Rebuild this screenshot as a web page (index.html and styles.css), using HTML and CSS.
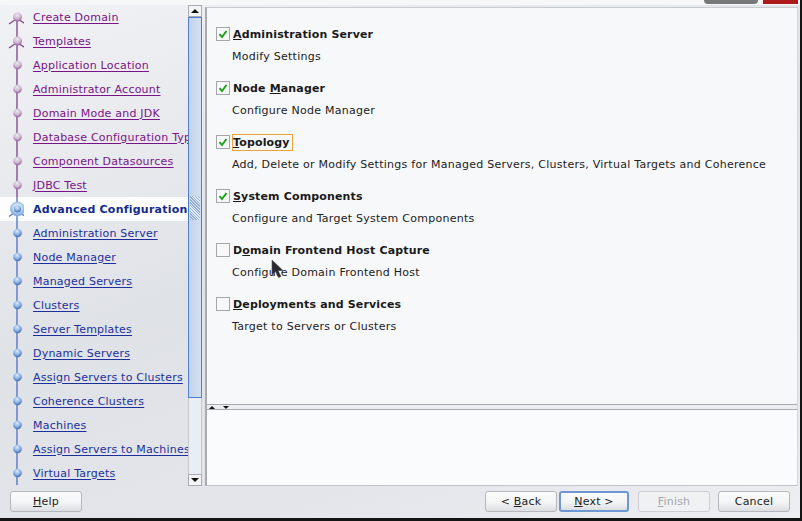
FILE: index.html
```html
<!DOCTYPE html>
<html lang="en">
<head>
<meta charset="utf-8">
<title>Configuration Wizard</title>
<link rel="stylesheet" href="styles.css">
</head>
<body>
<svg width="0" height="0" class="defs" aria-hidden="true">
  <defs>
    <radialGradient id="ballV" cx="45%" cy="30%" r="75%"><stop offset="0" stop-color="#efe6f0"/><stop offset=".55" stop-color="#cdb4d0"/><stop offset="1" stop-color="#85528c"/></radialGradient>
    <radialGradient id="ballB" cx="45%" cy="30%" r="75%"><stop offset="0" stop-color="#dfe9f8"/><stop offset=".5" stop-color="#8fb2e4"/><stop offset="1" stop-color="#2f62b8"/></radialGradient>
    <radialGradient id="ballC" cx="50%" cy="40%" r="60%"><stop offset="0" stop-color="#f2f7fd"/><stop offset=".6" stop-color="#b9d3ef"/><stop offset="1" stop-color="#6f9fd6"/></radialGradient>
    <symbol id="s-first" viewBox="0 0 24 24"><path d="M17 12V24" stroke="#7d3f88" stroke-width="1.300" fill="none"/><path d="M9 19 17 13.500l8.500 5.500" stroke="#7d3f88" stroke-width="1.100" fill="none"/><circle cx="17.500" cy="12" r="4.500" fill="url(#ballV)"/></symbol>
    <symbol id="s-tpl" viewBox="0 0 24 24"><path d="M17 0V24" stroke="#7d3f88" stroke-width="1.300" fill="none"/><path d="M9 19 17 13.500l8.500 5.500" stroke="#7d3f88" stroke-width="1.100" fill="none"/><circle cx="17.500" cy="12" r="4.500" fill="url(#ballV)"/></symbol>
    <symbol id="s-done" viewBox="0 0 24 24"><path d="M17 0V24" stroke="#7d3f88" stroke-width="1.300" fill="none"/><circle cx="17.500" cy="12" r="4.300" fill="url(#ballV)"/></symbol>
    <symbol id="s-cur" viewBox="0 0 24 24"><path d="M17 0V24" stroke="#4a72c4" stroke-width="1.300" fill="none"/><path d="M9 19.500 17 14l8.500 5.500" stroke="#4a72c4" stroke-width="1.100" fill="none"/><circle cx="17.500" cy="12" r="7" fill="url(#ballC)" stroke="#8fb4de" stroke-width=".8"/><circle cx="17.500" cy="12" r="3.500" fill="url(#ballB)"/></symbol>
    <symbol id="s-next" viewBox="0 0 24 24"><path d="M17 0V24" stroke="#4a72c4" stroke-width="1.300" fill="none"/><circle cx="17.500" cy="12" r="4.300" fill="url(#ballB)"/></symbol>
  </defs>
</svg>
<div class="window">
  <div class="topbar">
    <div class="brand-gray"></div>
    <div class="brand-red"></div>
  </div>
  <div class="main">
    <nav class="nav">
      <ul class="steps">
        <li class="step visited"><svg class="node"><use href="#s-first"/></svg><a>Create Domain</a></li>
        <li class="step visited"><svg class="node"><use href="#s-tpl"/></svg><a>Templates</a></li>
        <li class="step visited"><svg class="node"><use href="#s-done"/></svg><a>Application Location</a></li>
        <li class="step visited"><svg class="node"><use href="#s-done"/></svg><a>Administrator Account</a></li>
        <li class="step visited"><svg class="node"><use href="#s-done"/></svg><a>Domain Mode and JDK</a></li>
        <li class="step visited"><svg class="node"><use href="#s-done"/></svg><a>Database Configuration Type</a></li>
        <li class="step visited"><svg class="node"><use href="#s-done"/></svg><a>Component Datasources</a></li>
        <li class="step visited"><svg class="node"><use href="#s-done"/></svg><a>JDBC Test</a></li>
        <li class="step current"><svg class="node"><use href="#s-cur"/></svg><a>Advanced Configuration</a></li>
        <li class="step"><svg class="node"><use href="#s-next"/></svg><a>Administration Server</a></li>
        <li class="step"><svg class="node"><use href="#s-next"/></svg><a>Node Manager</a></li>
        <li class="step"><svg class="node"><use href="#s-next"/></svg><a>Managed Servers</a></li>
        <li class="step"><svg class="node"><use href="#s-next"/></svg><a>Clusters</a></li>
        <li class="step"><svg class="node"><use href="#s-next"/></svg><a>Server Templates</a></li>
        <li class="step"><svg class="node"><use href="#s-next"/></svg><a>Dynamic Servers</a></li>
        <li class="step"><svg class="node"><use href="#s-next"/></svg><a>Assign Servers to Clusters</a></li>
        <li class="step"><svg class="node"><use href="#s-next"/></svg><a>Coherence Clusters</a></li>
        <li class="step"><svg class="node"><use href="#s-next"/></svg><a>Machines</a></li>
        <li class="step"><svg class="node"><use href="#s-next"/></svg><a>Assign Servers to Machines</a></li>
        <li class="step"><svg class="node"><use href="#s-next"/></svg><a>Virtual Targets</a></li>
      </ul>
      <div class="scrollbar">
        <div class="sb-btn"><span class="tri up"></span></div>
        <div class="sb-thumb"><div class="sb-grip"></div></div>
        <div class="sb-rest"></div>
        <div class="sb-btn"><span class="tri down"></span></div>
      </div>
    </nav>
    <section class="pane">
      <div class="options">
        <div class="option">
          <div class="opt-head"><span class="check on"><svg viewBox="0 0 12 12"><path d="M2.500 6.200 5 9l4.500-6" fill="none" stroke="#1fa01f" stroke-width="2"/></svg></span><label class="opt-title"><u>A</u>dministration Server</label></div>
          <p class="opt-desc">Modify Settings</p>
        </div>
        <div class="option">
          <div class="opt-head"><span class="check on"><svg viewBox="0 0 12 12"><path d="M2.500 6.200 5 9l4.500-6" fill="none" stroke="#1fa01f" stroke-width="2"/></svg></span><label class="opt-title">Node <u>M</u>anager</label></div>
          <p class="opt-desc">Configure Node Manager</p>
        </div>
        <div class="option">
          <div class="opt-head"><span class="check on"><svg viewBox="0 0 12 12"><path d="M2.500 6.200 5 9l4.500-6" fill="none" stroke="#1fa01f" stroke-width="2"/></svg></span><label class="opt-title focused"><u>T</u>opology</label></div>
          <p class="opt-desc">Add, Delete or Modify Settings for Managed Servers, Clusters, Virtual Targets and Coherence</p>
        </div>
        <div class="option">
          <div class="opt-head"><span class="check on"><svg viewBox="0 0 12 12"><path d="M2.500 6.200 5 9l4.500-6" fill="none" stroke="#1fa01f" stroke-width="2"/></svg></span><label class="opt-title"><u>S</u>ystem Components</label></div>
          <p class="opt-desc">Configure and Target System Components</p>
        </div>
        <div class="option">
          <div class="opt-head"><span class="check"></span><label class="opt-title">D<u>o</u>main Frontend Host Capture</label></div>
          <p class="opt-desc">Configure Domain Frontend Host</p>
        </div>
        <div class="option">
          <div class="opt-head"><span class="check"></span><label class="opt-title"><u>D</u>eployments and Services</label></div>
          <p class="opt-desc">Target to Servers or Clusters</p>
        </div>
      </div>
      <div class="splitter"><span class="tri up small"></span><span class="tri down small"></span></div>
      <div class="detail"></div>
    </section>
  </div>
  <footer class="footer">
    <button class="btn help"><u>H</u>elp</button>
    <div class="spacer"></div>
    <button class="btn back">&lt; <u>B</u>ack</button>
    <button class="btn default"><u>N</u>ext &gt;</button>
    <button class="btn disabled"><u>F</u>inish</button>
    <button class="btn">Cancel</button>
  </footer>
</div>
<svg class="cursor" width="13" height="20" viewBox="0 0 13 20" aria-hidden="true"><path d="M1 1v15l3.500-3.500 3 6 2.500-1-3-6h5z" fill="#2a2a2e" stroke="#55565a" stroke-width=".6"/></svg>
</body>
</html>
```
FILE: styles.css
```css
* { box-sizing: border-box; }
html, body { margin: 0; padding: 0; }
body {
  position: relative;
  width: 802px;
  height: 521px;
  overflow: hidden;
  background: #141414;
  font-family: "DejaVu Sans", sans-serif;
  font-size: 11px;
  color: #1c1c1c;
}
.defs { position: absolute; }
.window {
  width: 800px;
  height: 518px;
  display: flex;
  flex-direction: column;
  background: linear-gradient(160deg, #f1f2f5 0%, #dfe2e7 45%, #e3e5ea 75%, #eceef2 100%);
}
.topbar {
  height: 5px;
  flex: none;
  display: flex;
  justify-content: flex-end;
  background: #f7f7f8;
  padding-right: 2px;
}
.brand-gray { width: 54px; height: 4px; margin-right: 5px; background: #77787a; border-radius: 0 0 6px 6px; }
.brand-red { width: 35px; height: 4px; background: #ad1a1c; }
.main {
  flex: 1;
  min-height: 0;
  display: flex;
  padding-right: 2px;
}
.nav { width: 205px; flex: none; display: flex; min-width: 0; padding-right: 3px; }
.steps {
  list-style: none;
  margin: 0;
  padding: 0;
  width: 188px;
  flex: none;
  overflow: hidden;
}
.step { height: 24px; display: flex; align-items: center; white-space: nowrap; }
.node { width: 24px; height: 24px; flex: none; margin-right: 9px; }
.step a {
  color: #1c2f9c;
  text-decoration: underline;
  text-underline-offset: 2px;
  letter-spacing: .22px;
}
.step.visited a { color: #7a1387; }
.step.current { background: #fdfdfe; }
.step.current a { color: #142a8c; font-weight: 700; text-decoration: none; letter-spacing: .23px; }
.scrollbar { width: 14px; flex: none; display: flex; flex-direction: column; }
.sb-btn {
  height: 12px;
  flex: none;
  display: flex;
  align-items: center;
  justify-content: center;
  background: #f4f5f7;
  border: 1px solid #a9abb0;
}
.sb-thumb {
  height: 381px;
  flex: none;
  display: flex;
  align-items: center;
  justify-content: center;
  background: linear-gradient(90deg, #c3d3e9, #d3e0f0);
  border: 1px solid #4f7fd0;
}
.sb-grip {
  width: 10px;
  height: 24px;
  background: repeating-linear-gradient(45deg, #93aed4 0 1px, #e3ebf6 1px 2px);
}
.sb-rest { flex: 1; background: #e9eef5; border-left: 1px solid #c4c7cc; border-right: 1px solid #c4c7cc; }
.tri { display: block; width: 0; height: 0; border-left: 4px solid transparent; border-right: 4px solid transparent; }
.tri.up { border-bottom: 4px solid #111; }
.tri.down { border-top: 4px solid #111; }
.tri.small { border-left-width: 3px; border-right-width: 3px; }
.tri.up.small { border-bottom-width: 3px; }
.tri.down.small { border-top-width: 3px; }
.pane {
  width: 593px;
  flex: none;
  display: flex;
  flex-direction: column;
  margin-top: 2px;
  background: #f7f8f9;
  border-left: 2px solid #a8aaae;
  border-right: 1px solid #d5d7da;
  border-top: 1px solid #c9cbcf;
  border-bottom: 1px solid #c2c4c8;
}
.options { height: 396px; flex: none; padding: 10px 0 0 9px; }
.option { height: 54px; }
.opt-head { height: 32px; display: flex; align-items: center; }
.check {
  width: 14px;
  height: 14px;
  flex: none;
  margin-right: 2px;
  background: #f8f8f8;
  border: 1px solid #a4a6a9;
  display: flex;
}
.check svg { width: 12px; height: 12px; }
.opt-title { margin-top: 1px; padding-top: 1px; font-weight: 700; color: #1a1a1a; border: 1px solid transparent; letter-spacing: .15px; line-height: 14px; }
.opt-title.focused { border-color: #eda33a; padding-right: 2px; }
.opt-desc { margin: 0 0 0 16px; line-height: 14px; color: #222; letter-spacing: .26px; white-space: nowrap; }
.splitter {
  height: 6px;
  flex: none;
  display: flex;
  align-items: center;
  gap: 8px;
  padding-left: 2px;
  background: #eceef1;
  border-top: 1px solid #a8aaae;
  border-bottom: 1px solid #a8aaae;
}
.detail { flex: 1; background: #fafbfc; }
.footer {
  height: 32px;
  flex: none;
  display: flex;
  align-items: flex-start;
  gap: 8px;
  padding: 5px 10px 0 10px;
}
.spacer { flex: 1; }
.btn {
  width: 72px;
  height: 21px;
  padding: 0;
  font: inherit;
  letter-spacing: .2px;
  color: #1c1c1c;
  background: linear-gradient(180deg, #fbfbfc 0%, #f3f4f5 55%, #dcdee1 100%);
  border: 1px solid #b5b7ba;
  border-radius: 3px;
}
.btn.back { margin-right: -6px; }
.btn.default { width: 70px; margin-right: 1px; border: 2px solid #6f97d3; }
.btn.disabled { color: #a6a8ab; background: #f0f1f3; border-color: #ccced1; }
.cursor { position: absolute; left: 271px; top: 259px; }
```
